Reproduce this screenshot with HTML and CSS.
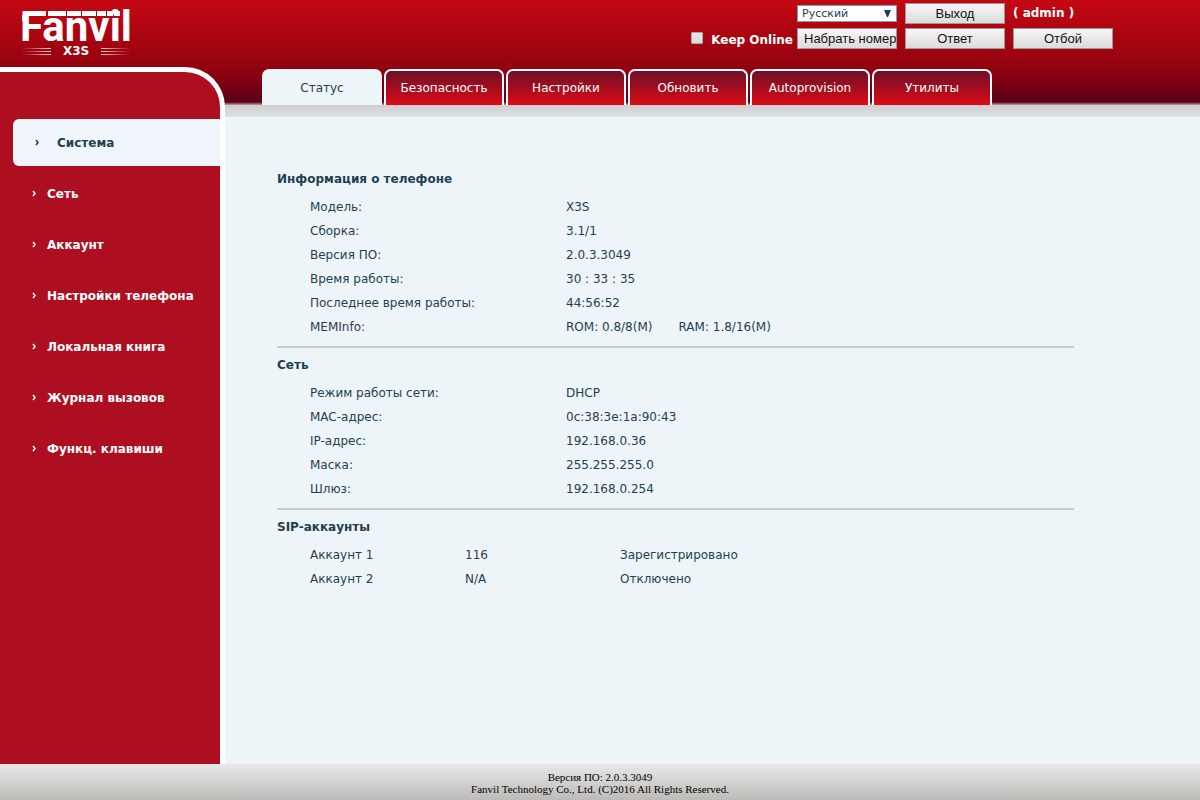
FILE: index.html
```html
<!DOCTYPE html>
<html lang="ru">
<head>
  <meta charset="UTF-8" />
  <meta name="viewport" content="width=device-width, initial-scale=1" />
  <title>Fanvil X3S</title>
  <link rel="stylesheet" href="styles.css">
</head>
<body>
  <header class="top">
    <div class="logo">
      <svg class="brand" width="112" height="34" viewBox="0 0 112 34">
        <text class="brand-text" x="-1" y="32">Fanvil</text>
        <path fill="#fff" d="M1 12V8Q1 2 8 2H25V7H8Q6 7 6 12Z" />
        <path fill="#fff" d="M27 2h18v5h-18zM46 2h14v5h-14zM61 2h14v5h-14zM76 2h9v5h-9zM86 2h6v5h-6zM93 2h6v5h-6z" />
      </svg>
      <div class="model">
        <span class="stripes stripes-left"></span>
        <span>X3S</span>
        <span class="stripes stripes-right"></span>
      </div>
    </div>

    <form class="tools">
      <span></span>
      <select class="lang" aria-label="Язык">
        <option>Русский</option>
        <option>English</option>
      </select>
      <button type="button">Выход</button>
      <span class="user">( admin )</span>
      <label class="keep">
        <input type="checkbox" name="keep" />
        <span>Keep Online</span>
      </label>
      <button type="button" class="dial">Набрать номер</button>
      <button type="button">Ответ</button>
      <button type="button">Отбой</button>
    </form>
  </header>

  <div class="page">
    <nav class="side">
      <a href="#" class="active"><svg width="5" height="7" viewBox="0 0 5 7"><path d="M1 1L3 3.5L1 6" /></svg>Система</a>
      <a href="#"><svg width="5" height="7" viewBox="0 0 5 7"><path d="M1 1L3 3.5L1 6" /></svg>Сеть</a>
      <a href="#"><svg width="5" height="7" viewBox="0 0 5 7"><path d="M1 1L3 3.5L1 6" /></svg>Аккаунт</a>
      <a href="#"><svg width="5" height="7" viewBox="0 0 5 7"><path d="M1 1L3 3.5L1 6" /></svg>Настройки телефона</a>
      <a href="#"><svg width="5" height="7" viewBox="0 0 5 7"><path d="M1 1L3 3.5L1 6" /></svg>Локальная книга</a>
      <a href="#"><svg width="5" height="7" viewBox="0 0 5 7"><path d="M1 1L3 3.5L1 6" /></svg>Журнал вызовов</a>
      <a href="#"><svg width="5" height="7" viewBox="0 0 5 7"><path d="M1 1L3 3.5L1 6" /></svg>Функц. клавиши</a>
    </nav>

    <div class="main">
      <nav class="tabs">
        <a href="#" class="active">Статус</a>
        <a href="#">Безопасность</a>
        <a href="#">Настройки</a>
        <a href="#">Обновить</a>
        <a href="#">Autoprovision</a>
        <a href="#">Утилиты</a>
      </nav>

      <main class="content">
        <section>
          <h2>Информация о телефоне</h2>
          <table class="info">
            <tr><th>Модель:</th><td>X3S</td></tr>
            <tr><th>Сборка:</th><td>3.1/1</td></tr>
            <tr><th>Версия ПО:</th><td>2.0.3.3049</td></tr>
            <tr><th>Время работы:</th><td>30 : 33 : 35</td></tr>
            <tr><th>Последнее время работы:</th><td>44:56:52</td></tr>
            <tr><th>MEMInfo:</th><td><span class="rom">ROM: 0.8/8(M)</span>RAM: 1.8/16(M)</td></tr>
          </table>
        </section>

        <section>
          <h2>Сеть</h2>
          <table class="info">
            <tr><th>Режим работы сети:</th><td>DHCP</td></tr>
            <tr><th>MAC-адрес:</th><td>0c:38:3e:1a:90:43</td></tr>
            <tr><th>IP-адрес:</th><td>192.168.0.36</td></tr>
            <tr><th>Маска:</th><td>255.255.255.0</td></tr>
            <tr><th>Шлюз:</th><td>192.168.0.254</td></tr>
          </table>
        </section>

        <section>
          <h2>SIP-аккаунты</h2>
          <table class="info accounts">
            <tr><th>Аккаунт 1</th><td>116</td><td>Зарегистрировано</td></tr>
            <tr><th>Аккаунт 2</th><td>N/A</td><td>Отключено</td></tr>
          </table>
        </section>
      </main>
    </div>
  </div>

  <footer class="bottom">
    <div>Версия ПО: 2.0.3.3049</div>
    <div>Fanvil Technology Co., Ltd. (C)2016 All Rights Reserved.</div>
  </footer>
</body>
</html>
```
FILE: styles.css
```css
* {
  box-sizing: border-box;
}
body {
  margin: 0;
  min-height: 100vh;
  display: flex;
  flex-direction: column;
  font-family: "DejaVu Sans", Verdana, sans-serif;
  font-size: 12px;
  color: #1f3f52;
  background: #edf5f8 linear-gradient(#c40812, #90020f 70px, #5c0019 102px, #b9a3ac 105px) no-repeat;
  background-size: 100% 105px;
}
a {
  text-decoration: none;
}

/* header */
.top {
  height: 67px;
  display: flex;
  justify-content: space-between;
  align-items: flex-start;
  padding: 3px 87px 0 21px;
  color: #fff;
}
.logo {
  padding-top: 6px;
}
.brand {
  display: block;
  overflow: visible;
}
.brand-text {
  font-family: Roboto, Arial, sans-serif;
  font-size: 42px;
  font-weight: bold;
  fill: #fff;
}
.model {
  display: flex;
  justify-content: space-between;
  align-items: center;
  width: 110px;
  font-weight: bold;
  line-height: 16px;
}
.stripes {
  width: 30px;
  height: 7px;
  background: repeating-linear-gradient(rgba(255, 255, 255, 0.8) 0 1px, transparent 1px 3px);
}
.stripes-left {
  mask-image: linear-gradient(to right, transparent, #000);
}
.stripes-right {
  mask-image: linear-gradient(to left, transparent, #000);
}
.tools {
  display: grid;
  grid-template-columns: auto 100px 100px 100px;
  gap: 4px 8px;
}
.tools button {
  height: 21px;
  padding: 0 6px;
  border: 1px solid #999;
  background: linear-gradient(#f6f6f6, #dcdcdc);
  color: #111;
  font-family: "Liberation Sans", Arial, sans-serif;
  font-size: 13px;
  white-space: nowrap;
}
.tools .dial {
  overflow: hidden;
  text-align: left;
}
.lang {
  align-self: center;
  height: 17px;
  padding: 0 4px;
  border: 1px solid #7f9db9;
  appearance: none;
  color: #1f3f52;
  font-family: "DejaVu Sans", Verdana, sans-serif;
  font-size: 11px;
  background: #fff url("data:image/svg+xml,%3Csvg xmlns='http://www.w3.org/2000/svg' width='7' height='7'%3E%3Cpath d='M0 0h7L4 7H3z' fill='%231f3f52'/%3E%3C/svg%3E") no-repeat right 5px center;
}
.user {
  font-weight: bold;
  line-height: 20px;
}
.keep {
  display: flex;
  gap: 8px;
  font-weight: bold;
  line-height: 24px;
  margin-right: -4px;
}
.keep input {
  appearance: none;
  width: 12px;
  height: 12px;
  margin: 4px 0 0;
  border: 1px solid #aaa;
  border-radius: 1px;
  background: linear-gradient(#e6e6e6, #dcdcdc);
}
.keep input:checked {
  background: #1f3f52;
}

/* layout */
.page {
  flex: 1;
  display: flex;
}
.main {
  flex: 1;
}

/* left menu */
.side {
  width: 225px;
  padding: 47px 0 20px 13px;
  border-top: 5px solid #fff;
  border-right: 5px solid #fff;
  border-top-right-radius: 40px;
  background: #ad0f20;
  display: flex;
  flex-direction: column;
  gap: 4px;
}
.side a {
  display: flex;
  align-items: center;
  gap: 10px;
  height: 47px;
  padding-left: 19px;
  color: #fff;
  font-weight: bold;
}
.side svg {
  fill: none;
  stroke: currentColor;
  stroke-width: 1.5;
}
.side .active {
  gap: 17px;
  padding-left: 22px;
  border-radius: 6px 0 0 6px;
  background: #eff5fa;
  color: #1f3f52;
}

/* tabs */
.tabs {
  display: flex;
  gap: 2px;
  padding: 2px 0 0 37px;
}
.tabs a {
  width: 120px;
  height: 36px;
  border: 2px solid #fff;
  border-bottom: 0;
  border-radius: 7px 7px 0 0;
  background: linear-gradient(#6e1028, #dc0a16);
  color: #fff;
  line-height: 34px;
  text-align: center;
}
.tabs .active {
  border-color: #edf5f8;
  background: #edf5f8;
  color: #1f3f52;
}

/* content */
.content {
  padding: 57px 126px 40px 52px;
  background: linear-gradient(#d2cdd1, #dae2e5) no-repeat;
  background-size: 100% 12px;
}
section {
  padding-bottom: 7px;
  border-bottom: 2px solid #ccc;
}
section:last-child {
  border-bottom: 0;
}
h2 {
  margin: 0;
  padding-top: 2px;
  font-size: 12px;
  line-height: 31px;
}
.info {
  margin-left: 33px;
  border-collapse: collapse;
}
.info th,
.info td {
  height: 24px;
  padding: 0;
  font-weight: normal;
  text-align: left;
}
.info th {
  width: 256px;
}
.accounts th,
.accounts td {
  width: 155px;
}
.rom {
  margin-right: 26px;
}

/* footer */
.bottom {
  padding: 7px 0 5px;
  background: linear-gradient(#e8e8e8, #bcbbb8);
  color: #000;
  font-family: "Liberation Serif", "Times New Roman", serif;
  font-size: 11px;
  line-height: 12px;
  text-align: center;
}
```
